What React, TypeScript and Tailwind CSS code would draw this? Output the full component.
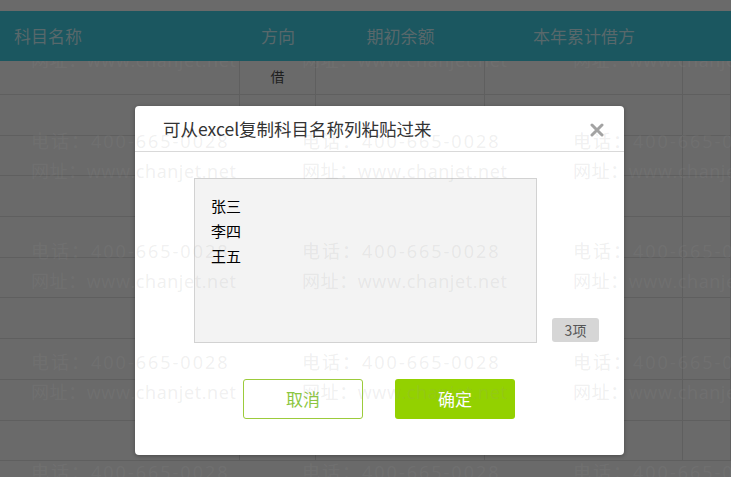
import React from "react";

const columns = [
  { key: "name", label: "科目名称", w: "w-[240px]", align: "justify-start pl-[14px]" },
  { key: "dir", label: "方向", w: "w-[76px]", align: "justify-center" },
  { key: "open", label: "期初余额", w: "w-[169px]", align: "justify-center" },
  { key: "debit", label: "本年累计借方", w: "w-[198px]", align: "justify-center" },
  { key: "more", label: "", w: "flex-1", align: "justify-center" },
];

const rowDirs = ["借", "", "", "", "", "", "", "", "", "借"];

function Watermark() {
  const rows = [0, 1, 2, 3, 4];
  const cols = [0, 1, 2];
  return (
    <div className="pointer-events-none absolute inset-0 z-30 flex flex-col pt-[15px] gap-[50.5px] overflow-hidden">
      {rows.map((r) => (
        <div key={r} className="flex shrink-0">
          {cols.map((c) => (
            <div
              key={c}
              className="w-[271px] shrink-0 pl-[31px] text-[18px] leading-[30px] text-[rgba(150,150,150,0.15)] whitespace-nowrap"
              style={{ fontFamily: '"Open Sans", "Noto Sans CJK SC", sans-serif' }}
            >
              <div className="tracking-[2px]">电话：400-665-0028</div>
              <div className="tracking-[0.6px]">网址：www.chanjet.net</div>
            </div>
          ))}
        </div>
      ))}
    </div>
  );
}

function Modal() {
  return (
    <div className="absolute left-[135px] top-[106px] z-20 w-[489px] h-[349px] rounded-[4px] bg-white shadow-[0_1px_4px_rgba(0,0,0,0.3)] flex flex-col">
      <div className="h-[46px] shrink-0 border-b border-[#d9d9d9] flex items-center justify-between pl-[28px] pr-[19px]">
        <span className="text-[17.5px] text-[#333] leading-none">可从excel复制科目名称列粘贴过来</span>
        <svg width="14" height="14" viewBox="0 0 14 14" className="mt-[2px] mr-[1px]">
          <path d="M2 2 L12 12 M12 2 L2 12" stroke="#a3a3a3" strokeWidth="3" strokeLinecap="round" />
        </svg>
      </div>
      <div className="flex items-end pl-[59px] pt-[26px]">
        <div className="w-[343px] h-[165px] bg-[#f3f3f3] border border-[#d2d2d2] pl-[16px] pt-[14px] text-[15px] leading-[25px] text-black">
          <div>张三</div>
          <div>李四</div>
          <div>王五</div>
        </div>
        <div className="ml-[15px] mb-[1px] w-[47px] h-[24px] rounded-[3px] bg-[#d6d6d6] flex items-center justify-center text-[14px] text-[#555]">
          3项
        </div>
      </div>
      <div className="flex pl-[108px] pt-[36px] gap-[32px]">
        <button className="w-[120px] h-[40px] rounded-[3px] border border-[#9ccb3b] bg-white text-[17px] text-[#8cc63f]">
          取消
        </button>
        <button className="w-[120px] h-[40px] rounded-[3px] bg-[#93d100] text-[17px] text-white">
          确定
        </button>
      </div>
    </div>
  );
}

export default function App() {
  return (
    <div
      className="relative w-[731px] h-[477px] overflow-hidden bg-[#6a6a6a]"
      style={{ fontFamily: '"Noto Sans CJK SC", "Microsoft YaHei", sans-serif' }}
    >
      <div className="h-[11px]" />
      <div className="relative z-40 h-[50px] flex bg-[#1b5760]">
        {columns.map((c) => (
          <div key={c.key} className={`${c.w} shrink-0 flex items-center ${c.align} text-[17px] text-[#58686b]`}>
            {c.label}
          </div>
        ))}
      </div>
      <div className="flex flex-col">
        {rowDirs.map((d, i) => (
          <div
            key={i}
            className={`flex shrink-0 border-b border-[#5f5f5f] ${i === 0 ? "h-[34px]" : "h-[40.7px]"}`}
          >
            {columns.map((c) => (
              <div
                key={c.key}
                className={`${c.w} shrink-0 border-r border-[#5f5f5f] flex justify-center text-[14px] text-[#1e1e1e] ${
                  i === 0 ? "pt-[5px]" : "pt-[12px]"
                }`}
              >
                {c.key === "dir" ? d : ""}
              </div>
            ))}
          </div>
        ))}
      </div>
      <Modal />
      <Watermark />
    </div>
  );
}
